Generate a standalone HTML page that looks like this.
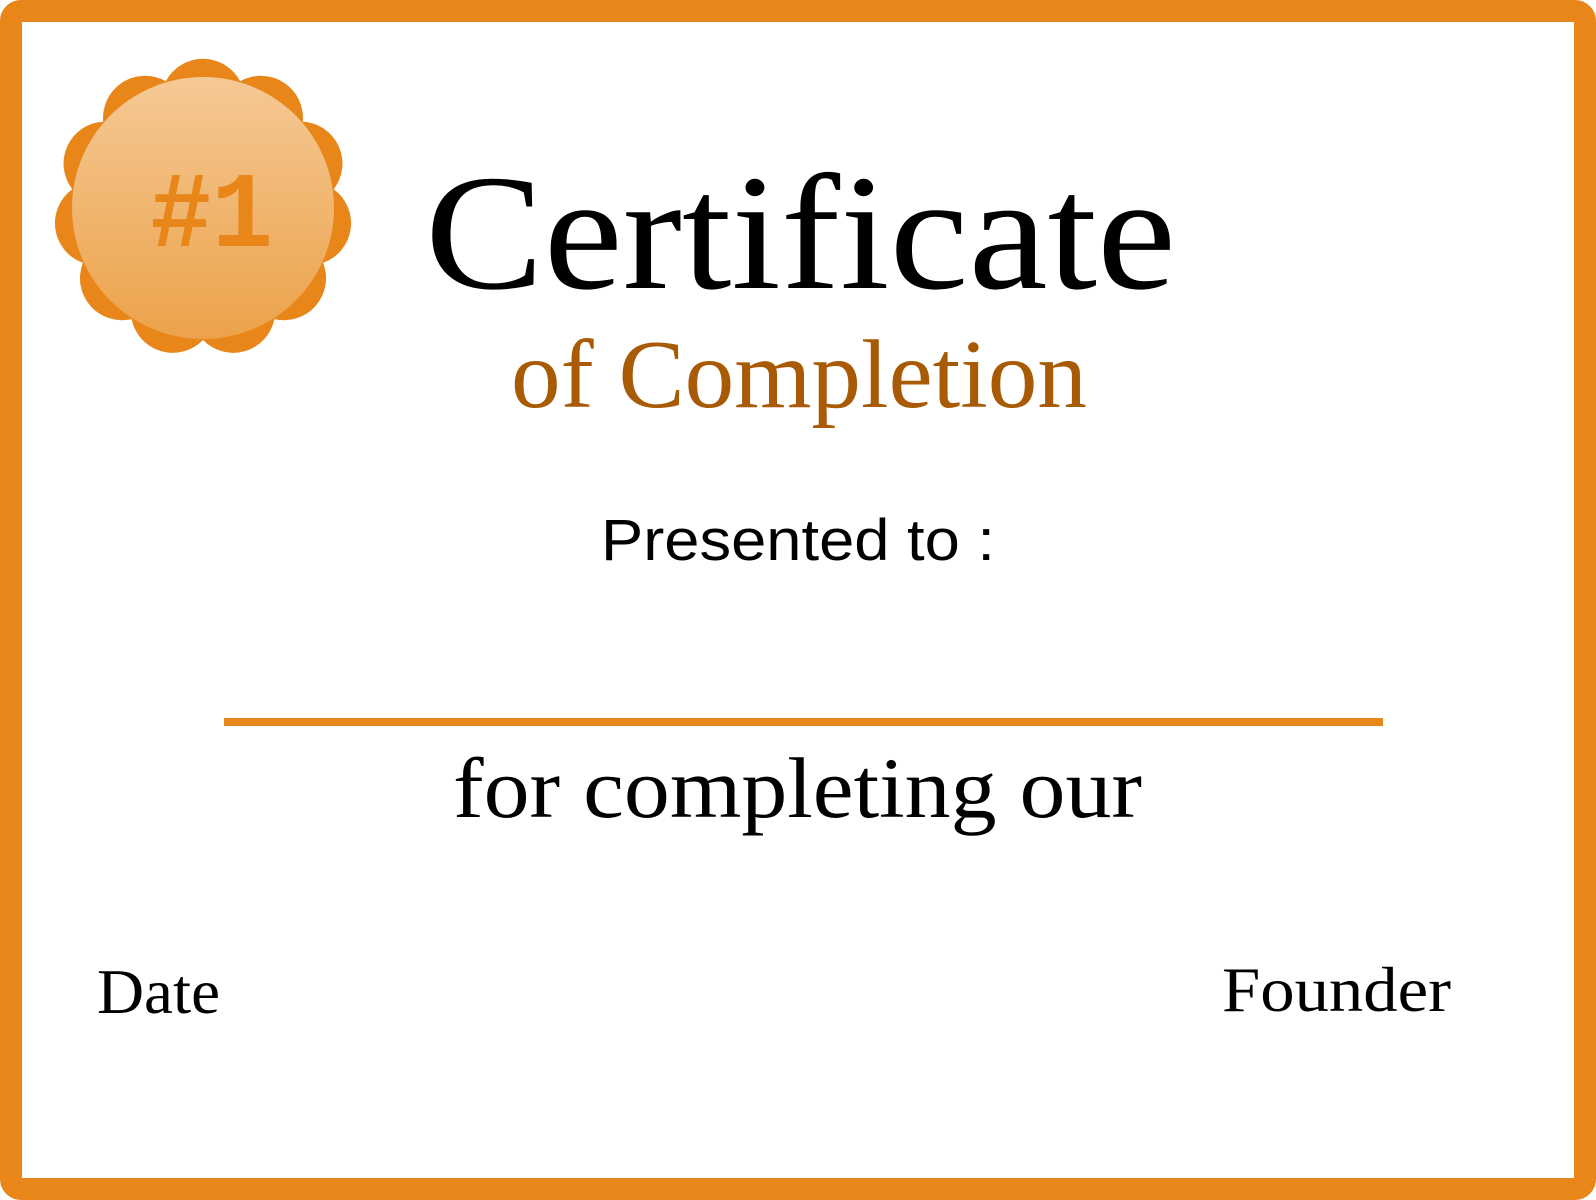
<!DOCTYPE html>
<html><head><meta charset="utf-8"><style>
html,body{margin:0;padding:0;background:#fff;}
svg{display:block;}
</style></head><body>
<svg width="1596" height="1200" viewBox="0 0 1596 1200" xmlns="http://www.w3.org/2000/svg">
<defs>
<linearGradient id="g" x1="0" y1="0" x2="0" y2="1">
<stop offset="0" stop-color="#f5c995"/><stop offset="1" stop-color="#eca24a"/>
</linearGradient>
</defs>
<rect x="11" y="11" width="1574" height="1178" rx="10" fill="#fff" stroke="#e8861a" stroke-width="22"/>
<path fill="#e8861a" d="M165.8,81.3 A42,42 0 0 1 240.2,81.3 A42,42 0 0 1 302.8,121.6 A42,42 0 0 1 333.7,189.2 A42,42 0 0 1 323.1,262.8 A42,42 0 0 1 274.4,319.1 A42,42 0 0 1 203,340 A42,42 0 0 1 131.6,319.1 A42,42 0 0 1 82.9,262.8 A42,42 0 0 1 72.3,189.2 A42,42 0 0 1 103.2,121.6 A42,42 0 0 1 165.8,81.3 Z"/>
<circle cx="203" cy="208" r="131" fill="url(#g)"/>
<text x="150" y="246" textLength="123" lengthAdjust="spacingAndGlyphs" font-family="Liberation Mono, monospace" font-weight="bold" font-size="108" fill="#e8861a">#1</text>
<text x="425" y="288" textLength="751" lengthAdjust="spacingAndGlyphs" font-family="Liberation Serif, serif" font-size="165" fill="#000">Certificate</text>
<text x="511" y="407" textLength="576" lengthAdjust="spacingAndGlyphs" font-family="Liberation Serif, serif" font-size="98" fill="#a85a05">of Completion</text>
<text x="601" y="560" textLength="394" lengthAdjust="spacingAndGlyphs" font-family="Liberation Sans, sans-serif" font-size="58" fill="#000">Presented to :</text>
<rect x="224" y="718" width="1159" height="8" fill="#e8861a"/>
<text x="453" y="817" textLength="689" lengthAdjust="spacingAndGlyphs" font-family="Liberation Serif, serif" font-size="86" fill="#000">for completing our</text>
<text x="97" y="1013" textLength="123" lengthAdjust="spacingAndGlyphs" font-family="Liberation Serif, serif" font-size="64" fill="#000">Date</text>
<text x="1222" y="1011" textLength="229" lengthAdjust="spacingAndGlyphs" font-family="Liberation Serif, serif" font-size="64" fill="#000">Founder</text>
</svg>
</body></html>
